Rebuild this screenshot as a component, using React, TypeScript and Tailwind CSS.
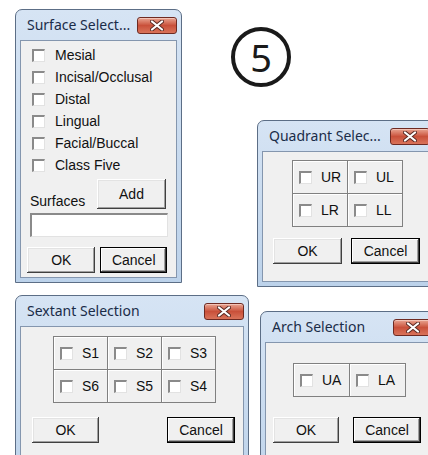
import React from 'react';

const ui = { fontFamily: '"Liberation Sans", Arial, sans-serif' };
const titleFont = { fontFamily: '"Noto Sans", "Open Sans", sans-serif' };

function CloseBtn() {
  return (
    <div className="flex h-[17px] w-[40px] items-center justify-center rounded-[3px] border border-[#6e2a22] bg-gradient-to-b from-[#e8a492] via-[#c9503a] to-[#d9735a] shadow-[inset_0_1px_0_#f3c3b6]">
      <svg width="14" height="11" viewBox="0 0 14 11">
        <path d="M2 1.5 L12 9.5 M12 1.5 L2 9.5" stroke="#5a2a24" strokeWidth="4" strokeLinecap="round" />
        <path d="M2 1.5 L12 9.5 M12 1.5 L2 9.5" stroke="#ffffff" strokeWidth="2.2" strokeLinecap="round" />
      </svg>
    </div>
  );
}

function Win({ pos, title, children }: { pos: string; title: string; children: React.ReactNode }) {
  return (
    <div className={`absolute ${pos} flex flex-col rounded-t-[7px] border border-[#5c6e86] bg-gradient-to-b from-[#d6e4f4] to-[#bcd2ea] px-[4px] pb-[4px]`}>
      <div className="flex h-[30px] shrink-0 items-center justify-between pl-[7px]">
        <span className="text-[14px] leading-none text-[#1a2c48]" style={titleFont}>{title}</span>
        <CloseBtn />
      </div>
      <div className="flex-1 border border-[#8496ae] bg-[#f0f0f0] text-[#111]" style={ui}>
        {children}
      </div>
    </div>
  );
}

function Box() {
  return <span className="h-[13px] w-[13px] shrink-0 border-t-2 border-l-2 border-r border-b border-t-[#8a8a8a] border-l-[#8a8a8a] border-r-[#e2e2e2] border-b-[#e2e2e2] bg-white" />;
}

function Btn({ label, def, w }: { label: string; def?: boolean; w: string }) {
  return (
    <div
      className={`flex h-[26px] ${w} items-center justify-center bg-[#f0f0f0] text-[14px] ${
        def
          ? 'border border-black shadow-[inset_-1px_-1px_0_#404040,inset_1px_1px_0_#ffffff,inset_-2px_-2px_0_#a0a0a0]'
          : 'shadow-[inset_-1px_-1px_0_#404040,inset_1px_1px_0_#ffffff,inset_-2px_-2px_0_#a0a0a0,inset_2px_2px_0_#e3e3e3]'
      }`}
    >
      {label}
    </div>
  );
}

function Cell({ label }: { label: string }) {
  return (
    <div className="flex h-[32px] items-center gap-[9px] bg-[#f0f0f0] pl-[6px] text-[14px] shadow-[inset_1px_1px_0_#ffffff]">
      <Box />
      <span>{label}</span>
    </div>
  );
}

const surfaces = ['Mesial', 'Incisal/Occlusal', 'Distal', 'Lingual', 'Facial/Buccal', 'Class Five'];

export default function App() {
  return (
    <div className="relative h-[455px] w-[428px] overflow-hidden bg-white">
      <Win pos="left-[15px] top-[9px] w-[167px] h-[274px]" title="Surface Select...">
        <div className="flex flex-col px-[9px] pt-[3px]">
          {surfaces.map(s => (
            <div key={s} className="flex h-[22px] items-center gap-[10px] pl-[2px] text-[14px]">
              <Box />
              <span>{s}</span>
            </div>
          ))}
          <div className="mt-[3px] flex items-end justify-between pr-[1px]">
            <span className="mb-[-3px] text-[14px]">Surfaces</span>
            <Btn label="Add" w="w-[69px] h-[30px]" />
          </div>
          <div className="mt-[4px] h-[24px] w-[138px] border-t-2 border-l-2 border-r border-b border-t-[#8a8a8a] border-l-[#8a8a8a] border-r-[#e2e2e2] border-b-[#e2e2e2] bg-white" />
          <div className="ml-[-3px] mt-[10px] flex gap-[5px]">
            <Btn label="OK" w="w-[69px]" />
            <Btn label="Cancel" def w="w-[67px]" />
          </div>
        </div>
      </Win>

      <div className="absolute left-[231px] top-[27px] flex h-[60px] w-[60px] items-center justify-center rounded-full border-[4px] border-[#1a1a1a]">
        <span className="text-[38px] leading-none text-[#1a1a1a]" style={titleFont}>5</span>
      </div>

      <Win pos="left-[257px] top-[120px] w-[178px] h-[167px]" title="Quadrant Selec...">
        <div className="flex flex-col pl-[29px] pt-[8px]">
          <div className="grid w-[111px] grid-cols-2 gap-px bg-[#808080] p-px">
            <Cell label="UR" />
            <Cell label="UL" />
            <Cell label="LR" />
            <Cell label="LL" />
          </div>
          <div className="ml-[-19px] mt-[11px] flex gap-[9px]">
            <Btn label="OK" w="w-[69px]" />
            <Btn label="Cancel" def w="w-[69px]" />
          </div>
        </div>
      </Win>

      <Win pos="left-[15px] top-[295px] w-[234px] h-[200px]" title="Sextant Selection">
        <div className="flex flex-col pl-[32px] pt-[9px]">
          <div className="grid w-[163px] grid-cols-3 gap-px bg-[#808080] p-px">
            <Cell label="S1" />
            <Cell label="S2" />
            <Cell label="S3" />
            <Cell label="S6" />
            <Cell label="S5" />
            <Cell label="S4" />
          </div>
          <div className="ml-[-21px] mt-[14px] flex w-[203px] justify-between">
            <Btn label="OK" w="w-[67px]" />
            <Btn label="Cancel" def w="w-[68px]" />
          </div>
        </div>
      </Win>

      <Win pos="left-[260px] top-[311px] w-[178px] h-[200px]" title="Arch Selection">
        <div className="flex flex-col pl-[27px] pt-[20px]">
          <div className="grid w-[113px] grid-cols-2 gap-px bg-[#808080] p-px">
            <Cell label="UA" />
            <Cell label="LA" />
          </div>
          <div className="ml-[-20px] mt-[20px] flex gap-[14px]">
            <Btn label="OK" w="w-[66px]" />
            <Btn label="Cancel" def w="w-[68px]" />
          </div>
        </div>
      </Win>
    </div>
  );
}
